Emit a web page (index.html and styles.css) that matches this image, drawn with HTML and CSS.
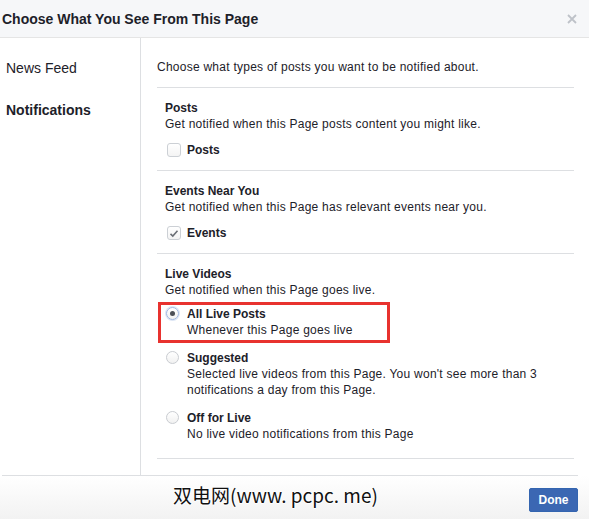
FILE: index.html
```html
<!DOCTYPE html>
<html>
<head>
<meta charset="utf-8">
<link rel="stylesheet" href="styles.css">
</head>
<body>
<div class="dialog">
  <div class="header">
    <span class="title">Choose What You See From This Page</span>
    <svg class="close" width="10" height="10" viewBox="0 0 10 10"><path d="M1 1L9 9M9 1L1 9" stroke="#bec2c9" stroke-width="1.8"/></svg>
  </div>
  <div class="body">
    <div class="nav">
      <div class="nav-item">News Feed</div>
      <div class="nav-item active">Notifications</div>
    </div>
    <div class="content">
      <div class="intro">Choose what types of posts you want to be notified about.</div>
      <div class="section">
        <div class="heading">Posts</div>
        <div class="desc">Get notified when this Page posts content you might like.</div>
        <div class="check-row"><span class="checkbox"></span><span class="label">Posts</span></div>
      </div>
      <div class="section">
        <div class="heading">Events Near You</div>
        <div class="desc">Get notified when this Page has relevant events near you.</div>
        <div class="check-row"><span class="checkbox checked"><svg width="10" height="9" viewBox="0 0 10 9"><path d="M1.5 4.8L3.8 7L8.5 1.8" fill="none" stroke="#6b6f76" stroke-width="1.6"/></svg></span><span class="label">Events</span></div>
      </div>
      <div class="section last">
        <div class="heading">Live Videos</div>
        <div class="desc">Get notified when this Page goes live.</div>
        <div class="options">
          <div class="option">
            <span class="radio selected"></span>
            <div class="opt-text">
              <div class="label">All Live Posts</div>
              <div class="desc">Whenever this Page goes live</div>
            </div>
            <div class="highlight"></div>
          </div>
          <div class="option">
            <span class="radio"></span>
            <div class="opt-text">
              <div class="label">Suggested</div>
              <div class="desc">Selected live videos from this Page. You won't see more than 3 notifications a day from this Page.</div>
            </div>
          </div>
          <div class="option">
            <span class="radio"></span>
            <div class="opt-text">
              <div class="label">Off for Live</div>
              <div class="desc">No live video notifications from this Page</div>
            </div>
          </div>
        </div>
      </div>
    </div>
  </div>
  <div class="footer">
    <span class="watermark">双电网(www. pcpc. me)</span>
    <button class="done">Done</button>
  </div>
</div>
</body>
</html>
```
FILE: styles.css
```css
html, body {
  margin: 0;
  padding: 0;
  background: #fff;
}
body {
  font-family: "Liberation Sans", Arial, sans-serif;
  color: #1d2129;
  font-size: 12px;
}
.dialog {
  width: 589px;
  height: 519px;
  display: flex;
  flex-direction: column;
  overflow: hidden;
}
.header {
  height: 37px;
  background: #f6f7f9;
  border-bottom: 1px solid #e5e5e5;
  display: flex;
  align-items: center;
  justify-content: space-between;
  padding: 0 12px 0 2px;
  flex-shrink: 0;
}
.title {
  font-size: 14px;
  font-weight: bold;
  color: #1d2129;
}
.close {
  display: block;
}
.body {
  display: flex;
  margin: 0 11px 0 2px;
  border-bottom: 1px solid #dddfe2;
  height: 437px;
  flex-shrink: 0;
}
.nav {
  width: 138px;
  border-right: 1px solid #dddfe2;
  padding-top: 21px;
  flex-shrink: 0;
}
.nav-item {
  font-size: 14px;
  line-height: 18px;
  padding-left: 4px;
  margin-bottom: 24px;
}
.nav-item.active {
  font-weight: bold;
}
.content {
  flex: 1;
  padding: 21px 4px 0 16px;
}
.intro {
  line-height: 16px;
  letter-spacing: 0.25px;
  padding-bottom: 12px;
  border-bottom: 1px solid #dddfe2;
}
.section {
  padding: 12px 0 12px 8px;
  border-bottom: 1px solid #dddfe2;
}
.section.last {
  padding-bottom: 16px;
}
.heading {
  font-weight: bold;
  line-height: 16px;
}
.desc {
  line-height: 16px;
  letter-spacing: 0.25px;
}
.check-row {
  display: flex;
  align-items: center;
  margin-top: 10px;
  height: 16px;
  padding-left: 2px;
}
.checkbox {
  width: 12px;
  height: 12px;
  border: 1px solid #ccd0d5;
  border-radius: 3px;
  background: linear-gradient(#fff, #f4f4f4);
  margin-right: 6px;
  display: flex;
  align-items: center;
  justify-content: center;
}
.label {
  font-weight: bold;
  line-height: 16px;
}
.options {
  margin-top: 8px;
  display: flex;
  flex-direction: column;
  gap: 12px;
}
.option {
  display: flex;
  align-items: flex-start;
  position: relative;
  padding-left: 1px;
}
.radio {
  width: 13px;
  height: 13px;
  border: 1px solid #c9ccd1;
  border-radius: 50%;
  background: linear-gradient(#fff, #f1f1f1);
  margin-top: 1px;
  margin-right: 8px;
  flex-shrink: 0;
  box-sizing: border-box;
  display: flex;
  align-items: center;
  justify-content: center;
}
.radio.selected {
  border-color: #9fb6e0;
  box-shadow: 0 0 0 1px #dde6f5;
}
.radio.selected::after {
  content: "";
  width: 5px;
  height: 5px;
  border-radius: 50%;
  background: #4b4f56;
}
.opt-text {
  flex: 1;
}
.highlight {
  position: absolute;
  left: -7px;
  top: -4px;
  width: 226px;
  height: 35px;
  border: 3px solid #e8322f;
  pointer-events: none;
}
.footer {
  flex: 1;
  position: relative;
  display: flex;
  justify-content: flex-end;
  align-items: flex-start;
  padding: 12px 11px 0 0;
  background: linear-gradient(#ffffff, #f2f2f2);
}
.done {
  width: 49px;
  height: 24px;
  background: #3b67b3;
  border: 1px solid #3465b0;
  border-radius: 2px;
  color: #fff;
  font-family: "Liberation Sans", Arial, sans-serif;
  font-weight: bold;
  font-size: 12px;
  padding: 0;
}
.watermark {
  position: absolute;
  left: 173px;
  top: 7px;
  font-family: "Noto Sans CJK SC", sans-serif;
  font-size: 19px;
  line-height: 24px;
  color: #111;
  text-shadow: 1px 0 0 #fff, -1px 0 0 #fff, 0 1px 0 #fff, 0 -1px 0 #fff;
}
```
